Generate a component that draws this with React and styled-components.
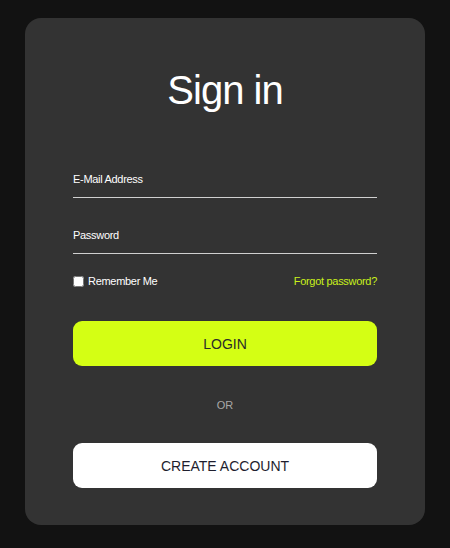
import React from 'react';
import styled, { createGlobalStyle } from 'styled-components';

const GlobalStyle = createGlobalStyle`
  html, body {
    margin: 0;
    padding: 0;
    background: #121212;
    font-family: "Liberation Sans", Arial, sans-serif;
  }
`;

const App = () => {
  return (
    <Page>
      <GlobalStyle />
      <Card>
        <Title>Sign in</Title>
        <Field>
          <Label>E-Mail Address</Label>
          <Input type="email" />
        </Field>
        <Field>
          <Label>Password</Label>
          <Input type="password" />
        </Field>
        <OptionsRow>
          <Remember>
            <Checkbox type="checkbox" />
            Remember Me
          </Remember>
          <Forgot href="#">Forgot password?</Forgot>
        </OptionsRow>
        <Button variant="primary">LOGIN</Button>
        <Divider>OR</Divider>
        <Button variant="secondary">CREATE ACCOUNT</Button>
      </Card>
    </Page>
  );
};

const Page = styled.div`
  width: 450px;
  height: 548px;
  box-sizing: border-box;
  padding: 18px 25px 23px;
`;

const Card = styled.div`
  box-sizing: border-box;
  height: 507px;
  background: #333333;
  border-radius: 16px;
  padding: 46px 48px 37px;
  display: flex;
  flex-direction: column;
`;

const Title = styled.h1`
  margin: 0 0 56px;
  text-align: center;
  color: #ffffff;
  font-weight: 400;
  font-size: 40px;
  letter-spacing: -1px;
  line-height: 52px;
`;

const Field = styled.div`
  display: flex;
  flex-direction: column;
  & + & {
    margin-top: 30px;
  }
`;

const Label = styled.label`
  color: #ffffff;
  font-size: 11px;
  letter-spacing: -0.3px;
  line-height: 14px;
`;

const Input = styled.input`
  height: 11px;
  background: transparent;
  border: none;
  border-bottom: 1px solid #d0d0d0;
  padding: 0;
  outline: none;
  color: #fff;
`;

const OptionsRow = styled.div`
  display: flex;
  justify-content: space-between;
  align-items: center;
  margin-top: 21px;
  margin-bottom: 34px;
`;

const Remember = styled.label`
  display: flex;
  align-items: center;
  color: #ffffff;
  font-size: 11px;
  letter-spacing: -0.3px;
`;

const Checkbox = styled.input`
  margin: 0 4px 0 0;
  width: 11px;
  height: 11px;
`;

const Forgot = styled.a`
  color: #c8f11a;
  font-size: 11px;
  letter-spacing: -0.3px;
  text-decoration: none;
`;

const Button = styled.button`
  height: 45px;
  width: 100%;
  border: none;
  border-radius: 9px;
  font-family: "Liberation Sans", Arial, sans-serif;
  font-size: 14px;
  color: ${(p) => (p.variant === 'primary' ? '#2b2b2b' : '#1e1e2e')};
  background: ${(p) => (p.variant === 'primary' ? '#d4ff14' : '#ffffff')};
  cursor: pointer;
`;

const Divider = styled.div`
  text-align: center;
  color: #a8a8a8;
  font-size: 11px;
  margin: 32px 0 31px;
  line-height: 14px;
`;

export default App;
